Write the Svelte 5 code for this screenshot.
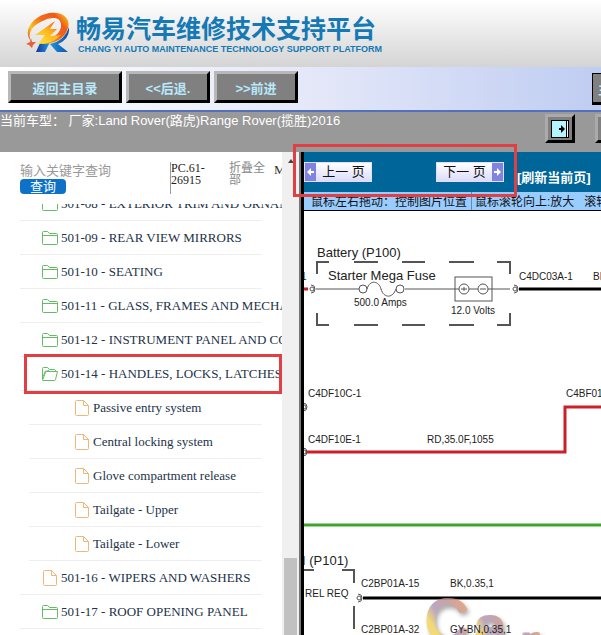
<script lang="ts">
  type TreeNode = { label: string; kind: 'folder' | 'open' | 'file'; level: number; marked?: boolean };
  type DiagramLabel = { x: number; y: number; text: string; size?: number };

  let keyword = $state('');

  const navButtons = ['返回主目录', '<<后退.', '>>前进'];

  const nodes: TreeNode[] = [
    { label: '501-08 - EXTERIOR TRIM AND ORNAMENTATION', kind: 'folder', level: 1 },
    { label: '501-09 - REAR VIEW MIRRORS', kind: 'folder', level: 1 },
    { label: '501-10 - SEATING', kind: 'folder', level: 1 },
    { label: '501-11 - GLASS, FRAMES AND MECHANISMS', kind: 'folder', level: 1 },
    { label: '501-12 - INSTRUMENT PANEL AND CONSOLE', kind: 'folder', level: 1 },
    { label: '501-14 - HANDLES, LOCKS, LATCHES', kind: 'open', level: 1, marked: true },
    { label: 'Passive entry system', kind: 'file', level: 2 },
    { label: 'Central locking system', kind: 'file', level: 2 },
    { label: 'Glove compartment release', kind: 'file', level: 2 },
    { label: 'Tailgate - Upper', kind: 'file', level: 2 },
    { label: 'Tailgate - Lower', kind: 'file', level: 2 },
    { label: '501-16 - WIPERS AND WASHERS', kind: 'file', level: 1 },
    { label: '501-17 - ROOF OPENING PANEL', kind: 'folder', level: 1 },
  ];

  const labels: DiagramLabel[] = [
    { x: 13, y: 46, text: 'Battery (P100)', size: 13 },
    { x: 24, y: 69, text: 'Starter Mega Fuse', size: 13 },
    { x: 50, y: 95, text: '500.0 Amps' },
    { x: 147, y: 103, text: '12.0 Volts' },
    { x: -3, y: 69, text: '1' },
    { x: 215, y: 69, text: 'C4DC03A-1' },
    { x: 289, y: 69, text: 'BK' },
    { x: 4, y: 186, text: 'C4DF10C-1' },
    { x: 4, y: 232, text: 'C4DF10E-1' },
    { x: 123, y: 232, text: 'RD,35.0F,1055' },
    { x: 262, y: 186, text: 'C4BF01' },
    { x: -2, y: 354, text: 'I (P101)', size: 13 },
    { x: 1, y: 386, text: 'REL REQ' },
    { x: 57, y: 376, text: 'C2BP01A-15' },
    { x: 146, y: 376, text: 'BK,0.35,1' },
    { x: 57, y: 422, text: 'C2BP01A-32' },
    { x: 146, y: 422, text: 'GY-BN,0.35,1' },
  ];

  const terminals = [
    [8, 78], [211, 78], [0, 196], [0, 241], [55, 387],
  ];
</script>

<div class="page">
  <header class="banner">
    <svg class="logo" viewBox="0 0 48 44" aria-hidden="true">
      <defs>
        <linearGradient id="flame" x1="0" y1="0.8" x2="1" y2="0.2">
          <stop offset="0" stop-color="#ef5a1c" />
          <stop offset="0.2" stop-color="#fdc21a" />
          <stop offset="0.5" stop-color="#f36c1c" />
          <stop offset="0.8" stop-color="#ee5a1a" />
          <stop offset="1" stop-color="#fbb414" />
        </linearGradient>
        <linearGradient id="bolt" x1="1" y1="0" x2="0.2" y2="1">
          <stop offset="0" stop-color="#ee4f1c" />
          <stop offset="0.5" stop-color="#fdb41a" />
          <stop offset="1" stop-color="#ffe23a" />
        </linearGradient>
        <linearGradient id="leg" x1="0" y1="0" x2="1" y2="0">
          <stop offset="0" stop-color="#1b2f98" />
          <stop offset="0.4" stop-color="#1b9ae0" />
          <stop offset="1" stop-color="#164aa6" />
        </linearGradient>
      </defs>
      <path d="M16 31L26 30L21 40H12Z M26 32C36 30 42 24 45 15C46 24 40 30 34 32L44 40H33Z" fill="url(#leg)" />
      <path d="M7 29C-2 19 9 4 25 1C38 -1 47 6 44 16C41 26 32 32 17 32C30 27 38 20 37 12C36 5 28 5 21 8C8 13 3 21 7 29Z" fill="url(#flame)" />
      <path d="M31 9L11 23H21L14 32C25 32 33 28 37 23L26 24L33 17H26Z" fill="url(#bolt)" />
      <path d="M7 26L8 30L12 30L9 33L8 36L5 33L2 32L6 30Z" fill="#ea5f35" />
    </svg>
    <div class="brand">
      <h1>畅易汽车维修技术支持平台</h1>
      <p>CHANG YI AUTO MAINTENANCE TECHNOLOGY SUPPORT PLATFORM</p>
    </div>
  </header>

  <nav class="toolbar">
    {#each navButtons as text, index}
      <button class="nav-btn" class:wide={index === 0} type="button">{text}</button>
    {/each}
    <button class="nav-btn edge-btn" type="button">主页</button>
  </nav>

  <div class="vehicle-bar">
    <p>当前车型： 厂家:Land Rover(路虎)Range Rover(揽胜)2016</p>
    <div class="frame-tools">
      <button class="tool-btn" type="button" aria-label="展开目录">
        <svg viewBox="0 0 18 18"><path d="M0 0H18V18H0Z" fill="#000" /><path d="M1 1H15V17H1Z" fill="#b4f4ff" /><path d="M16 1H17V17H16Z" fill="#fff" /><path d="M8 8H10V5L14 9L10 13V10H8Z" fill="#000" /></svg>
      </button>
      <button class="tool-btn" type="button" aria-label="收起目录">
        <svg viewBox="0 0 18 18"><path d="M0 0H18V18H0Z" fill="#b4f4ff" /><path d="M0 0H2V18H0Z" fill="#000" /></svg>
      </button>
    </div>
  </div>

  <main class="frames">
    <aside class="sidebar">
      <div class="sidebar-body">
        <form class="search" onsubmit={(e) => e.preventDefault()}>
          <div class="search-field">
            <input type="text" aria-label="关键字" placeholder="输入关键字查询" bind:value={keyword} />
            <button type="submit">查询</button>
          </div>
          <span class="doc-code">PC.61-26915</span>
          <a class="collapse" href="#collapse">折叠全部</a>
          <span class="doc-extra">MI</span>
        </form>

        <div class="tree-view">
          <ul class="tree">
            {#each nodes as node}
              <li class:child={node.level === 2} class:marked={node.marked}>
                <a href="#node">
                  {#if node.kind === 'file'}
                    <svg class="file" viewBox="0 0 14 16"><path d="M1.500 .5H8.500L13.500 5.500V14.500Q13.500 15.500 12.500 15.500H1.500Q.5 15.500 .5 14.500V1.500Q.5 .5 1.500 .5Z M8.500 .5V5.500H13.500" /></svg>
                  {:else if node.kind === 'open'}
                    <svg class="folder" viewBox="0 0 16 14"><path d="M.5 12.500V1.500Q.5 .5 1.500 .5H5.500L7.500 2.500H12.500Q13.500 2.500 13.500 4.500M.5 13L3.500 5.500Q4 4.500 5 4.500H15.500L13.500 12.500Q13.200 13.500 12.500 13.500H1Q.3 13.500 .5 12.500M1.500 9L3 4.500L7 3.500" /></svg>
                  {:else}
                    <svg class="folder" viewBox="0 0 16 14"><path d="M.5 1.500Q.5 .5 1.500 .5H5.500L7.500 2.500H14.500Q15.500 2.500 15.500 3.500V12.500Q15.500 13.500 14.500 13.500H1.500Q.5 13.500 .5 12.500Z M.5 4.500H15.500" /></svg>
                  {/if}
                  <span>{node.label}</span>
                </a>
              </li>
            {/each}
          </ul>
        </div>
      </div>
      <div class="scrollbar" aria-hidden="true">
        <span class="arrow"></span>
        <span class="thumb"></span>
      </div>
    </aside>

    <section class="viewer">
      <div class="pager">
        <button class="page-btn" type="button">
          <svg class="tip" viewBox="0 0 11 18"><path d="M2 9L6 5V8H9V10H6V13Z" /></svg>
          <span class="word">上一 页</span>
        </button>
        <button class="page-btn next" type="button">
          <span class="word">下一 页</span>
          <svg class="tip" viewBox="0 0 11 18"><path d="M9 9L5 5V8H2V10H5V13Z" /></svg>
        </button>
        <a href="#refresh">[刷新当前页]</a>
      </div>
      <p class="hint">
        <span>鼠标左右拖动：控制图片位置</span>
        <span class="zoom-hint">鼠标滚轮向上:放大 &nbsp; 滚轮向下:缩小</span>
      </p>

      <div class="diagram">
        <svg width="480" height="480" viewBox="0 0 480 480" role="img" aria-label="电路图">
          <defs>
            <linearGradient id="mark" x1="0" y1="1" x2="1" y2="0">
              <stop offset="0" stop-color="#f5e03c" />
              <stop offset="0.3" stop-color="#f0cf58" />
              <stop offset="0.45" stop-color="#ab90b4" />
              <stop offset="0.65" stop-color="#b98f90" />
              <stop offset="0.9" stop-color="#f0905a" />
            </linearGradient>
          </defs>
          <g class="frame">
            <path d="M13 63V51H25M50 51H74M98 51H121M145 51H170M193 51H206V63" />
            <path d="M13 102V114H25M50 114H74M98 114H121M145 114H170M193 114H206V102" />
            <path d="M0 359H10M38 359H50V372M50 395V418" />
          </g>
          <g class="thin">
            <path d="M12 78H55M101 78H155M165 78H174M184 78H206" />
            <path d="M63 78C66 68 75 70 77 78C80 88 89 87 92 78" />
            <circle cx="59" cy="78" r="4" />
            <circle cx="96" cy="78" r="4" />
            <rect x="151" y="66" width="37" height="24" />
            <circle cx="160" cy="78" r="5" />
            <circle cx="179" cy="78" r="5" />
            <path d="M157 78H163M160 76V80M176 78H182" />
          </g>
          <path class="wire red" d="M0 78H4M2 241H261V196H480" />
          <path class="wire green" d="M0 314H480" />
          <path class="wire black" d="M215 78H480M59 387H480" />
          <g class="thin">
            {#each terminals as [cx, cy]}
              <circle {cx} {cy} r="2" />
              <path d={`M${cx - 1} ${cy - 4}A4 4 0 0 1 ${cx - 1} ${cy + 4}`} />
            {/each}
          </g>
          <g class="watermark">
            <text x="121" y="430" font-size="60">C</text>
            <text x="170" y="436" font-size="58">a</text>
            <text x="216" y="453" font-size="58">r</text>
          </g>
          {#each labels as item}
            <text x={item.x} y={item.y} font-size={item.size ?? 10}>{item.text}</text>
          {/each}
        </svg>
      </div>
    </section>
    <div class="callout" aria-hidden="true"></div>
  </main>
</div>

<style>
  :global(body) { margin: 0; background: #fff; }
  .page {
    display: flex;
    flex-direction: column;
    height: 100vh;
    overflow: hidden;
    font-family: "Liberation Sans", "Noto Sans CJK SC", sans-serif;
  }
  h1, p, ul { margin: 0; padding: 0; }
  button { font-family: inherit; cursor: pointer; }
  a { text-decoration: none; }

  .banner {
    display: flex;
    flex: none;
    gap: 4px;
    height: 67px;
    padding: 12px 24px 0;
    box-sizing: border-box;
    background: linear-gradient(#fff, #d4d4d4);
  }
  .logo { flex: none; width: 48px; height: 44px; }
  .brand { color: #1479b4; white-space: nowrap; }
  .brand h1 { font-size: 25px; line-height: 30px; font-weight: 700; font-family: "Noto Sans CJK SC", sans-serif; }
  .brand p { padding-left: 2px; font-size: 9px; line-height: 14px; font-weight: 700; }

  .toolbar {
    display: flex;
    flex: none;
    gap: 4px;
    height: 45px;
    padding: 4px 0 0 8px;
    box-sizing: border-box;
    overflow: hidden;
    border-bottom: 2px solid #5470bd;
    background: linear-gradient(90deg, #fff, #e2e6f8 55%, #bfcdf2);
  }
  .nav-btn {
    flex: none;
    width: 84px;
    height: 32px;
    padding: 0;
    border: 3px solid;
    border-color: #b8b8b8 #000 #000 #b8b8b8;
    background: #808080;
    color: #b8e8fa;
    font-size: 13px;
    font-weight: 700;
  }
  .wide { width: 114px; }
  .edge-btn { width: 40px; margin: 2px -31px 0 auto; border-width: 1px 3px 3px 1px; border-color: #000; }

  .vehicle-bar {
    display: flex;
    flex: none;
    justify-content: space-between;
    height: 40px;
    overflow: hidden;
    background: #999;
    color: #fff;
  }
  .vehicle-bar p { font-size: 13px; line-height: 18px; white-space: nowrap; }
  .frame-tools { display: flex; flex: none; gap: 20px; margin-right: -24px; padding-top: 2px; }
  .tool-btn {
    width: 30px;
    height: 29px;
    padding: 2px;
    border: 3px solid;
    border-color: #aaa #000 #000 #aaa;
    background: #808080;
  }
  .tool-btn svg { display: block; width: 18px; height: 18px; margin: auto; }

  .frames { position: relative; display: flex; flex: 1; min-height: 0; }
  .sidebar { display: flex; flex: none; width: 50%; max-width: 299px; border-right: 2px solid #777; }
  .sidebar-body { display: flex; flex-direction: column; flex: 1; min-width: 0; overflow: hidden; }
  .search {
    display: flex;
    flex: none;
    height: 52px;
    padding: 10px 0 0 20px;
    box-sizing: border-box;
    white-space: nowrap;
  }
  .search-field { display: flex; flex: none; flex-direction: column; align-items: flex-start; width: 150px; }
  .search input {
    width: 100%;
    height: 17px;
    padding: 0;
    border: 0;
    outline: 0;
    font-family: inherit;
    font-size: 13px;
    color: #333;
    background: transparent;
  }
  .search input::placeholder { color: #999; }
  .search button {
    width: 46px;
    height: 15px;
    padding: 0;
    border: 0;
    border-radius: 4px;
    background: #0d72c7;
    color: #fff;
    font-size: 13px;
    line-height: 15px;
  }
  .doc-code {
    flex: none;
    width: 38px;
    height: 32px;
    margin-right: 20px;
    border-left: 1px solid #999;
    font: 12px/12px "Liberation Serif", serif;
    white-space: normal;
    color: #222;
  }
  .collapse { flex: none; width: 38px; margin-right: 7px; font-size: 12px; line-height: 12px; white-space: normal; color: #888; }
  .doc-extra { font: 13px/16px "Liberation Serif", serif; color: #333; }

  .tree-view { flex: 1; min-height: 0; overflow: hidden; }
  .tree { margin-top: -17px; list-style: none; }
  .tree li { position: relative; height: 34px; margin: 0 20px; box-sizing: border-box; border-bottom: 1px solid #eee; }
  .tree a {
    display: flex;
    align-items: center;
    gap: 3px;
    height: 33px;
    padding-left: 22px;
    font-family: "Liberation Serif", serif;
    font-size: 13px;
    color: #223248;
    white-space: nowrap;
  }
  .tree .child { margin-left: 29px; }
  .tree .child a { padding-left: 45px; }
  .tree svg { flex: none; fill: none; }
  .folder { width: 16px; height: 14px; stroke: #62bd62; }
  .file { width: 14px; height: 16px; margin: 0 1px; stroke: #efb777; }
  .marked::after {
    content: '';
    position: absolute;
    inset: -3px -20px -4px 4px;
    border: 3px solid #e04043;
  }

  .scrollbar { display: flex; flex: none; flex-direction: column; align-items: center; justify-content: space-between; width: 17px; background: #f0f0f0; }
  .arrow { margin-top: 7px; border: 3px solid transparent; border-top: 0; border-bottom: 4px solid #444; }
  .thumb { width: 13px; height: 77px; background: #c1c1c1; }

  .viewer { display: flex; flex: 1; flex-direction: column; min-width: 0; overflow: hidden; border-left: 3px solid #000; }
  .pager { display: flex; flex: none; align-items: flex-start; height: 40px; padding-top: 10px; box-sizing: border-box; background: #069; white-space: nowrap; }
  .page-btn {
    display: flex;
    flex: none;
    width: 68px;
    height: 20px;
    padding: 0;
    border: 1px solid #dfe0ff;
    background: linear-gradient(#fff, #dcdcfa);
    font-size: 13px;
    line-height: 18px;
    color: #111;
  }
  .word { flex: 1; }
  .tip { flex: none; width: 11px; height: 18px; background: #8084e0; fill: #fff; }
  .next { margin-left: 64px; }
  .pager a { margin: 7px 0 0 13px; font-size: 13px; line-height: 18px; font-weight: 700; color: #fff; }
  .hint {
    display: flex;
    flex: none;
    height: 18px;
    padding-left: 7px;
    border-bottom: 1px solid #000;
    background: #9cf;
    font-size: 12px;
    line-height: 20px;
    white-space: nowrap;
    color: #111;
  }
  .zoom-hint { margin-left: 4px; padding-left: 3px; border-left: 1px solid #68a; }
  .diagram { flex: 1; min-height: 0; overflow: hidden; }
  .diagram svg { display: block; }
  .diagram text { fill: #222; }
  .frame path { fill: none; stroke: #555; stroke-width: 2; }
  .thin { fill: none; stroke: #555; }
  .wire { fill: none; stroke-width: 3; }
  .red { stroke: #c9202a; }
  .green { stroke: #3ea62a; }
  .black { stroke: #000; }
  .watermark { opacity: 0.8; filter: drop-shadow(2px 3px 2px #999); }
  .diagram .watermark text { fill: url(#mark); stroke: url(#mark); stroke-width: 3; stroke-linejoin: round; }

  .callout { position: absolute; top: -8px; left: 293px; width: 218px; height: 47px; border: 3px solid #e04043; pointer-events: none; }
</style>
